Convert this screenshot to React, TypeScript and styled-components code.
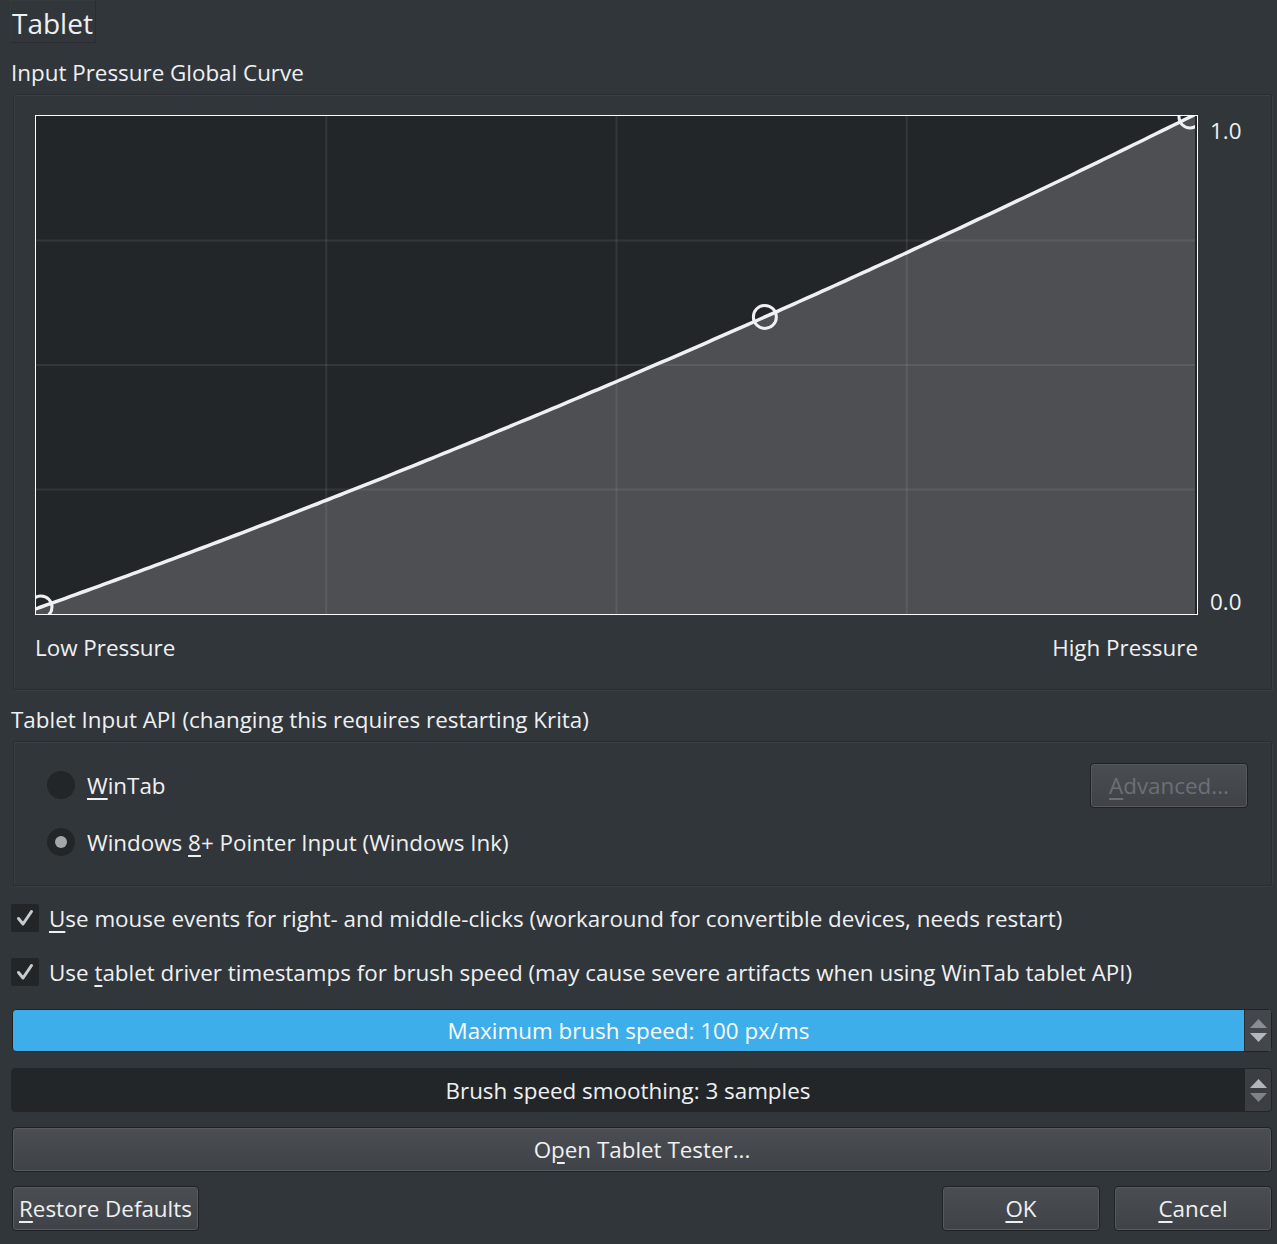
import React from 'react'
import styled, { createGlobalStyle } from 'styled-components'

// ─── Global ───────────────────────────────────────────────────────────────────

const GlobalStyle = createGlobalStyle`
  html, body { margin: 0; padding: 0; background: #31363b; }
  * { box-sizing: border-box; }
`

// ─── Styled components ────────────────────────────────────────────────────────

const Page = styled.div`
  width: 1277px; height: 1244px; overflow: hidden;
  background: #31363b; color: #eff0f1;
  font-family: "Open Sans", "Noto Sans", sans-serif; font-size: 22.4px;
  padding: 0 5px 0 11px;
  display: flex; flex-direction: column;
`

const TitleFrame = styled.div`
  align-self: flex-start; margin-left: -1px;
  height: 43px; padding: 0 2px 0 1px;
  font-size: 28px; line-height: 44px;
  border: 1px solid #2a2e32; border-top-color: #353a3f; border-left-color: #353a3f;
`

const SectionLabel = styled.div<{ $top: number }>`
  margin-top: ${({ $top }) => $top}px;
  line-height: 30px; height: 30px; white-space: nowrap;
`

const GroupBox = styled.div<{ $top: number }>`
  margin-top: ${({ $top }) => $top}px; margin-left: 2px;
  border: 1px solid #2a2e32; border-radius: 2px;
  box-shadow: inset 1px 1px 0 #3a3f44, 1px 1px 0 #393e43;
`

const CurveGroup = styled(GroupBox)`
  padding: 20px 0 26px 21px;
`

const CurveRow = styled.div`display: flex; align-items: stretch;`

const Canvas = styled.div`
  width: 1163px; height: 500px; flex-shrink: 0;
  border: 1px solid #fcfcfc; background: #232629;
  & svg { display: block; }
`

const AxisCol = styled.div`
  margin-left: 12px; padding-top: 1px;
  display: flex; flex-direction: column; justify-content: space-between;
  line-height: 30px; margin-bottom: -2px;
`

const PressureRow = styled.div`
  width: 1163px; margin-top: 18px;
  display: flex; justify-content: space-between;
  line-height: 30px;
`

const ApiGroup = styled(GroupBox)`
  padding: 21px 23px 21px 33px;
  display: grid; grid-template-columns: 1fr auto; row-gap: 12px;
`

const RadioRow = styled.div`
  height: 44px; display: flex; align-items: center; gap: 12px;
`

const RadioDot = styled.span<{ $checked?: boolean }>`
  width: 28px; height: 28px; border-radius: 50%;
  background: #232629; position: relative; flex-shrink: 0;
  &::after {
    content: ''; display: ${({ $checked }) => ($checked ? 'block' : 'none')};
    position: absolute; left: 8px; top: 8px; width: 12px; height: 12px;
    border-radius: 50%; background: #a4a7aa;
  }
`

const Mn = styled.span`
  text-decoration: underline;
  text-decoration-thickness: 2px;
  text-underline-offset: 4px;
`

const Button = styled.div<{ $w?: number; $disabled?: boolean }>`
  height: 45px; ${({ $w }) => ($w ? `width: ${$w}px;` : '')}
  padding: 0 6px;
  display: flex; align-items: center; justify-content: center;
  border: 1px solid #1e2225; border-radius: 4px;
  background: linear-gradient(#4a4e53, #3f4348);
  box-shadow: inset 0 0 0 1px #575b60;
  color: ${({ $disabled }) => ($disabled ? '#6b7075' : '#eff0f1')};
  white-space: nowrap;
`

const CheckRow = styled.div<{ $top: number }>`
  margin-top: ${({ $top }) => $top}px;
  height: 28px; display: flex; align-items: center; gap: 10px;
  white-space: nowrap;
`

const CheckBox = styled.span`
  width: 28px; height: 28px; border-radius: 2px; background: #232629;
  display: flex; align-items: center; justify-content: center; flex-shrink: 0;
`

const SpinBox = styled.div<{ $top: number; $h: number; $left: number; $active?: boolean }>`
  margin-top: ${({ $top }) => $top}px; margin-left: ${({ $left }) => $left}px;
  height: ${({ $h }) => $h}px;
  display: flex; border-radius: 4px; overflow: hidden;
  border: 1px solid ${({ $active }) => ($active ? '#1f2326' : '#232629')};
  background: ${({ $active }) => ($active ? '#3daee9' : '#232629')};
`

const SpinText = styled.div<{ $active?: boolean }>`
  flex: 1; display: flex; align-items: center; justify-content: center;
  color: ${({ $active }) => ($active ? '#fcfcfc' : '#eff0f1')};
`

const SpinButtons = styled.div<{ $active?: boolean }>`
  width: 27px; flex-shrink: 0;
  display: flex; flex-direction: column; align-items: center; justify-content: center; gap: 5px;
  background: ${({ $active }) => ($active ? '#43474c' : '#3b3f44')};
  border-left: 1px solid ${({ $active }) => ($active ? '#2a2e32' : '#232629')};
  & svg { display: block; }
`

const TesterButton = styled(Button)`
  margin-top: 15px; margin-left: 1px;
`

const Footer = styled.div`
  margin-top: 14px; margin-left: 1px;
  display: flex; align-items: center; gap: 14px;
`

const Spacer = styled.div`flex: 1;`

// ─── Curve ────────────────────────────────────────────────────────────────────

const W = 1161
const H = 498
const curve = (nx: number) => 0.163 * nx * nx + 0.837 * nx
const toX = (nx: number) => 5 + nx * 1149
const toY = (ny: number) => 491 - ny * 490

function CurveChart() {
  const pts: string[] = []
  for (let i = -2; i <= 202; i++) {
    const nx = i / 200
    pts.push(`${toX(nx).toFixed(1)},${toY(curve(nx)).toFixed(1)}`)
  }
  const fill = [...pts, `1200,${toY(curve(1.01)).toFixed(1)}`, '1200,600', '-20,600'].join(' ')
  const grid = 'rgba(255,255,255,0.08)'
  return (
    <svg width={W - 2} height={H} viewBox={`0 0 ${W - 2} ${H}`} style={{ overflow: 'hidden' }}>
      <polygon points={fill} fill="#4e4f53" />
      {[1, 2, 3].map((i) => (
        <line key={`v${i}`} x1={(W / 4) * i} x2={(W / 4) * i} y1={0} y2={H} stroke={grid} strokeWidth={2} />
      ))}
      {[1, 2, 3].map((i) => (
        <line key={`h${i}`} x1={0} x2={W} y1={(H / 4) * i} y2={(H / 4) * i} stroke={grid} strokeWidth={2} />
      ))}
      <polyline points={pts.join(' ')} fill="none" stroke="#eff0f1" strokeWidth={3.5} />
      <circle cx={toX(0)} cy={toY(0)} r={11} fill="none" stroke="#eff0f1" strokeWidth={3} />
      <circle cx={toX(0.63)} cy={toY(curve(0.63))} r={11.5} fill="none" stroke="#eff0f1" strokeWidth={3} />
      <circle cx={toX(1)} cy={toY(1)} r={11} fill="none" stroke="#eff0f1" strokeWidth={3} />
    </svg>
  )
}

function Arrow({ up, color }: { up?: boolean; color: string }) {
  return (
    <svg width="17" height="9" viewBox="0 0 17 9">
      <polygon points={up ? '0,9 8.5,0 17,9' : '0,0 17,0 8.5,9'} fill={color} />
    </svg>
  )
}

function Check() {
  return (
    <svg width="18" height="18" viewBox="0 0 18 18">
      <path d="M2.5 9.5 L7 15 L15.5 2.5" fill="none" stroke="#c8cbce" strokeWidth={3} strokeLinecap="round" strokeLinejoin="round" />
    </svg>
  )
}

// ─── Component ────────────────────────────────────────────────────────────────

export default function App() {
  return (
    <Page>
      <GlobalStyle />
      <TitleFrame>Tablet</TitleFrame>
      <SectionLabel $top={15}>Input Pressure Global Curve</SectionLabel>

      <CurveGroup $top={6}>
        <CurveRow>
          <Canvas>
            <CurveChart />
          </Canvas>
          <AxisCol>
            <span>1.0</span>
            <span>0.0</span>
          </AxisCol>
        </CurveRow>
        <PressureRow>
          <span>Low Pressure</span>
          <span>High Pressure</span>
        </PressureRow>
      </CurveGroup>

      <SectionLabel $top={15}>Tablet Input API (changing this requires restarting Krita)</SectionLabel>

      <ApiGroup $top={6}>
        <RadioRow>
          <RadioDot />
          <span><Mn>W</Mn>inTab</span>
        </RadioRow>
        <Button $w={158} $disabled><span><Mn>A</Mn>dvanced...</span></Button>
        <RadioRow>
          <RadioDot $checked />
          <span>Windows <Mn>8</Mn>+ Pointer Input (Windows Ink)</span>
        </RadioRow>
      </ApiGroup>

      <CheckRow $top={18}>
        <CheckBox><Check /></CheckBox>
        <span><Mn>U</Mn>se mouse events for right- and middle-clicks (workaround for convertible devices, needs restart)</span>
      </CheckRow>
      <CheckRow $top={26}>
        <CheckBox><Check /></CheckBox>
        <span>Use <Mn>t</Mn>ablet driver timestamps for brush speed (may cause severe artifacts when using WinTab tablet API)</span>
      </CheckRow>

      <SpinBox $top={23} $h={43} $left={1} $active>
        <SpinText $active>Maximum brush speed: 100 px/ms</SpinText>
        <SpinButtons $active>
          <Arrow up color="#8a8e92" />
          <Arrow color="#b4b7ba" />
        </SpinButtons>
      </SpinBox>
      <SpinBox $top={16} $h={44} $left={0}>
        <SpinText>Brush speed smoothing: 3 samples</SpinText>
        <SpinButtons>
          <Arrow up color="#b4b7ba" />
          <Arrow color="#7f8387" />
        </SpinButtons>
      </SpinBox>

      <TesterButton><span>O<Mn>p</Mn>en Tablet Tester...</span></TesterButton>

      <Footer>
        <Button><span><Mn>R</Mn>estore Defaults</span></Button>
        <Spacer />
        <Button $w={158}><span><Mn>O</Mn>K</span></Button>
        <Button $w={158}><span><Mn>C</Mn>ancel</span></Button>
      </Footer>
    </Page>
  )
}
